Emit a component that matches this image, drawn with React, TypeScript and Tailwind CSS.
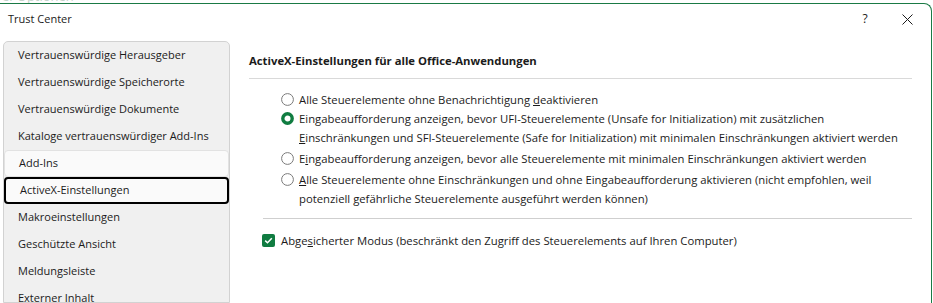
import React from "react";

const font = { fontFamily: '"Open Sans", "Noto Sans", sans-serif' };

function Radio({ checked }: { checked?: boolean }) {
  return checked ? (
    <svg width="13" height="13" viewBox="0 0 13 13" className="shrink-0">
      <circle cx="6.5" cy="6.5" r="4.7" fill="#fff" stroke="#107c41" strokeWidth="3.4" />
    </svg>
  ) : (
    <svg width="13" height="13" viewBox="0 0 13 13" className="shrink-0">
      <circle cx="6.5" cy="6.5" r="5.9" fill="#fff" stroke="#7a7a7a" strokeWidth="1" />
    </svg>
  );
}

function Option({ checked, children, className = "" }: { checked?: boolean; children: React.ReactNode; className?: string }) {
  return (
    <div className={"flex items-start gap-[5px] " + className}>
      <div className="h-[19px] flex items-center">
        <Radio checked={checked} />
      </div>
      <div className="leading-[19px]">{children}</div>
    </div>
  );
}

const navItems = [
  "Vertrauenswürdige Herausgeber",
  "Vertrauenswürdige Speicherorte",
  "Vertrauenswürdige Dokumente",
  "Kataloge vertrauenswürdiger Add-Ins",
  "Add-Ins",
  "ActiveX-Einstellungen",
  "Makroeinstellungen",
  "Geschützte Ansicht",
  "Meldungsleiste",
  "Externer Inhalt",
];

export default function App() {
  return (
    <div className="w-[933px] h-[303px] bg-white overflow-hidden flex flex-col text-[11px] text-[#1b1b1b]" style={font}>
      <div className="h-[3px] overflow-hidden shrink-0">
        <div className="-mt-[11px] pl-[2px] text-[13px] text-[#c3d3ca] leading-[14px]">el-Optionen</div>
      </div>
      <div className="flex-1 min-h-0 border-t border-r border-[#1a7a45] rounded-tr-[8px] mr-[1px] flex flex-col overflow-hidden">
        <div className="h-[30px] shrink-0 flex items-center pl-[8px] pr-[18px]">
          <span className="flex-1">Trust Center</span>
          <span className="text-[12px] font-medium w-[10px] text-center mr-[32px]">?</span>
          <svg width="11" height="11" viewBox="0 0 11 11">
            <path d="M0.5 0.5 L10.5 10.5 M10.5 0.5 L0.5 10.5" stroke="#1b1b1b" strokeWidth="1" />
          </svg>
        </div>
        <div className="flex flex-1 min-h-0 pt-[7px] pl-[3px]">
          <div className="w-[227px] shrink-0 bg-[#f0f0f0] border border-[#d2d2d2] rounded-t-[5px] flex flex-col">
            {navItems.map((t) => {
              const sel = t === "ActiveX-Einstellungen";
              const hov = t === "Add-Ins";
              return (
                <div
                  key={t}
                  className={
                    "h-[27px] shrink-0 flex items-center pl-[14px] " +
                    (sel
                      ? "bg-[#fafafa] border-2 border-black rounded-[4px] pl-[12px]"
                      : hov
                      ? "bg-[#fafafa] border border-[#e2e2e2] rounded-[4px] pl-[13px]"
                      : "")
                  }
                >
                  {t}
                </div>
              );
            })}
          </div>
          <div className="ml-[19px] w-[663px] flex flex-col text-[11.3px]">
            <div className="pt-[12px] h-[38px] font-bold leading-[15px] border-b border-[#d9d9d9]">
              ActiveX-Einstellungen für alle Office-Anwendungen
            </div>
            <div className="pl-[32px] pt-[11px] flex flex-col">
              <Option>
                Alle Steuerelemente ohne Benachrichtigung <u>d</u>eaktivieren
              </Option>
              <Option checked>
                Eingabeaufforderung anzeigen, bevor UFI-Steuerelemente (Unsafe for Initialization) mit zusätzlichen
                <br />
                <u>E</u>inschränkungen und SFI-Steuerelemente (Safe for Initialization) mit minimalen Einschränkungen aktiviert werden
              </Option>
              <Option className="mt-[2px]">
                E<u>i</u>ngabeaufforderung anzeigen, bevor alle Steuerelemente mit minimalen Einschränkungen aktiviert werden
              </Option>
              <Option className="mt-[2px]">
                <u>A</u>lle Steuerelemente ohne Einschränkungen und ohne Eingabeaufforderung aktivieren (nicht empfohlen, weil
                <br />
                potenziell gefährliche Steuerelemente ausgeführt werden können)
              </Option>
            </div>
            <div className="ml-[14px] mt-[10px] border-t border-[#cfcfcf]" />
            <div className="ml-[13px] mt-[12px] flex items-center gap-[6px]">
              <div className="w-[13px] h-[13px] rounded-[2px] bg-[#107c41] flex items-center justify-center">
                <svg width="9" height="9" viewBox="0 0 9 9">
                  <path d="M1.2 4.6 L3.5 6.8 L7.8 2.2" fill="none" stroke="#fff" strokeWidth="1.5" />
                </svg>
              </div>
              <span className="leading-[19px]">
                Abge<u>s</u>icherter Modus (beschränkt den Zugriff des Steuerelements auf Ihren Computer)
              </span>
            </div>
          </div>
        </div>
      </div>
    </div>
  );
}
